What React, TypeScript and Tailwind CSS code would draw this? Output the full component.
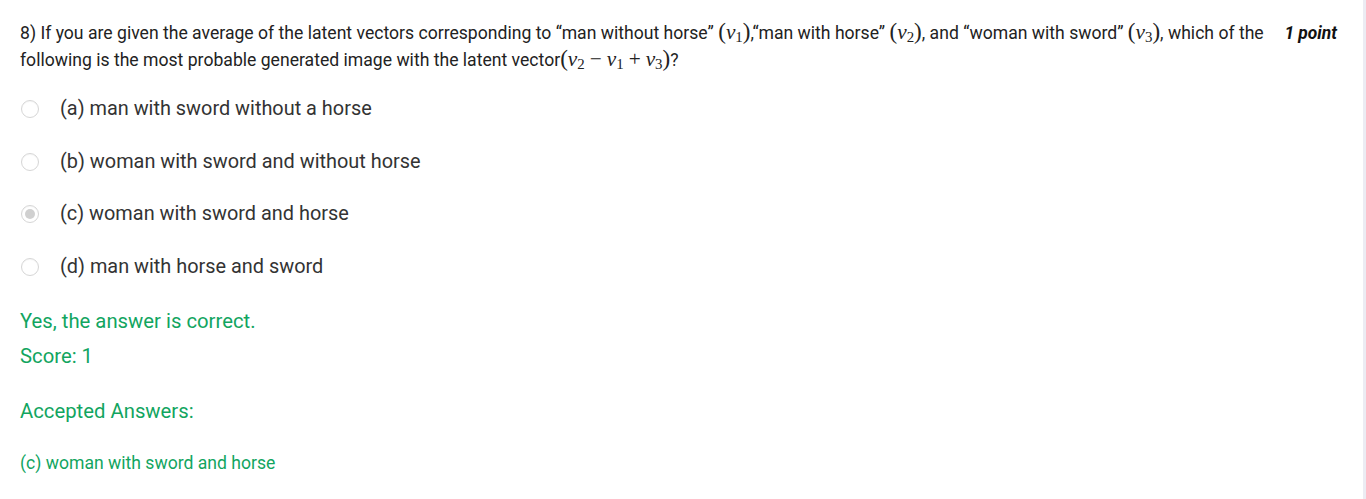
import React from 'react';

const GREEN = 'text-[#12a55f]';

function V({ n }: { n: string }): JSX.Element {
  return (
    <span className="whitespace-nowrap">
      <span className="italic">v</span>
      <span className="relative top-[0.22em] text-[0.7em] not-italic">{n}</span>
    </span>
  );
}

function Op({ children }: { children: React.ReactNode }): JSX.Element {
  return <span className="mx-[5px]">{children}</span>;
}

function Math({ children }: { children: React.ReactNode }): JSX.Element {
  return (
    <span className="font-['Liberation_Serif','DejaVu_Serif',serif] text-[21.3px] leading-none">
      <span className="text-[23px]">(</span>
      {children}
      <span className="text-[23px]">)</span>
    </span>
  );
}

function Radio({ checked }: { checked?: boolean }): JSX.Element {
  return (
    <span className="flex h-[18px] w-[18px] shrink-0 items-center justify-center rounded-full border border-[#d6d6d6] bg-white shadow-[inset_0_1px_1px_rgba(0,0,0,0.04)]">
      {checked && <span className="h-[10px] w-[10px] rounded-full bg-[#d0d0d0]" />}
    </span>
  );
}

const options = [
  { label: '(a) man with sword without a horse' },
  { label: '(b) woman with sword and without horse' },
  { label: '(c) woman with sword and horse', checked: true },
  { label: '(d) man with horse and sword' },
];

export default function App(): JSX.Element {
  return (
    <div className="flex min-h-[499px] w-full bg-white font-['Roboto','Liberation_Sans',sans-serif] text-[#222]">
      <div className="flex-1 pl-[20px] pr-[26px] pt-[20px]">
        <div className="flex items-start">
          <p className="flex-1 text-[17.6px] leading-[27px]">
            8) If you are given the average of the latent vectors corresponding to “man without horse”{' '}
            <Math>
              <V n="1" />
            </Math>
            ,“man with horse”{' '}
            <Math>
              <V n="2" />
            </Math>
            , and “woman with sword”{' '}
            <Math>
              <V n="3" />
            </Math>
            , which of the following is the most probable generated image with the latent vector
            <Math>
              <V n="2" />
              <Op>−</Op>
              <V n="1" />
              <Op>+</Op>
              <V n="3" />
            </Math>
            ?
          </p>
          <span className="ml-[18px] shrink-0 text-[17.4px] font-bold italic leading-[27px] text-[#111]">
            1 point
          </span>
        </div>

        <div className="mt-[9px] flex flex-col">
          {options.map((o) => (
            <label key={o.label} className="flex h-[52.5px] items-center gap-[21px] pl-[1px]">
              <Radio checked={o.checked} />
              <span className="text-[19.9px] text-[#333]">{o.label}</span>
            </label>
          ))}
        </div>

        <div className={`mt-[15px] flex flex-col ${GREEN}`}>
          <p className="text-[20.3px] leading-[27px]">Yes, the answer is correct.</p>
          <p className="mt-[8px] text-[20.3px] leading-[27px]">Score: 1</p>
          <p className="mt-[28px] text-[20.3px] leading-[27px]">Accepted Answers:</p>
          <p className="mt-[25.5px] text-[17.6px] leading-[24px]">(c) woman with sword and horse</p>
        </div>
      </div>
      <div className="w-[3px] shrink-0 self-stretch bg-[#ececf3]" />
    </div>
  );
}
